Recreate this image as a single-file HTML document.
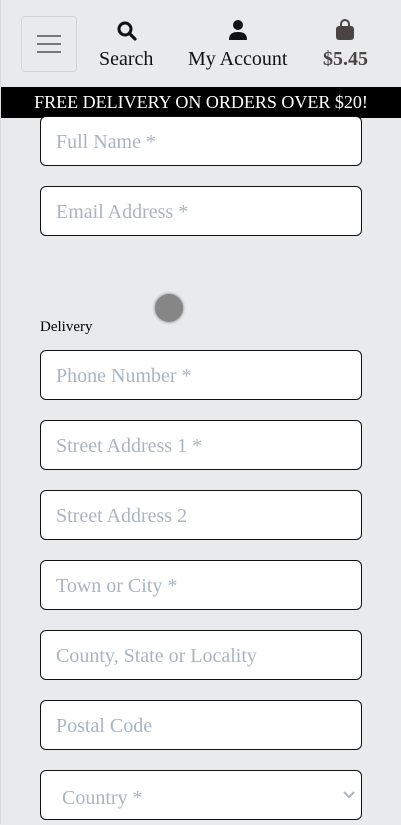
<!DOCTYPE html>
<html><head><meta charset="utf-8"><style>
body{margin:0;width:401px;height:824px;overflow:hidden;background:#e9eaec;font-family:"Liberation Serif",serif;position:relative}
.bl{position:absolute;left:0;top:0;width:1px;height:824px;background:#dcdcdc}
.ham{position:absolute;left:21px;top:16px;width:56px;height:56px;border:1px solid #d4d4d6;border-radius:4px;box-sizing:border-box}
.ham i{position:absolute;left:15px;width:24px;height:2px;background:#777}
.nav{position:absolute;top:48px;font-size:20px;color:#111;text-align:center}
.banner{position:absolute;left:1px;top:87px;width:400px;height:31px;background:#000;color:#fff;font-size:18px;text-align:center;line-height:31px}
.in{position:absolute;left:40px;width:322px;height:50px;background:#fff;border:1px solid #111;border-radius:6px;box-sizing:border-box;font-size:20px;color:#a9b5c1;padding-left:15px;line-height:50px}
</style></head><body>
<div class="bl"></div>
<div class="ham"><i style="top:18px"></i><i style="top:26px"></i><i style="top:34px"></i></div>
<svg style="position:absolute;left:116px;top:20px" width="22" height="22" viewBox="0 0 22 22"><circle cx="9" cy="9" r="6" fill="none" stroke="#111" stroke-width="3"/><path d="M13.5 13.5L19 19" stroke="#111" stroke-width="3.2" stroke-linecap="round"/></svg>
<div class="nav" style="left:99px">Search</div>
<svg style="position:absolute;left:228px;top:19px" width="20" height="22" viewBox="0 0 20 22"><circle cx="10" cy="6" r="5" fill="#111"/><path d="M1 21c0-6 3-8 9-8s9 2 9 8z" fill="#111"/></svg>
<div class="nav" style="left:188px">My Account</div>
<svg style="position:absolute;left:335px;top:19px" width="20" height="22" viewBox="0 0 20 22"><path d="M6 8V5a4 4 0 0 1 8 0v3" fill="none" stroke="#4a4444" stroke-width="2"/><rect x="1" y="7" width="18" height="14" rx="3" fill="#4a4444"/></svg>
<div class="nav" style="left:323px;color:#4a4444;font-weight:bold">$5.45</div>
<div class="banner">FREE DELIVERY ON ORDERS OVER $20!</div>
<div class="in" style="top:116px">Full Name *</div>
<div class="in" style="top:186px">Email Address *</div>
<div style="position:absolute;left:155px;top:294px;width:28px;height:28px;border-radius:50%;background:#868686;box-shadow:0 0 2px 1px #aaa"></div>
<div style="position:absolute;left:40px;top:319px;font-size:15px">Delivery</div>
<div class="in" style="top:350px">Phone Number *</div>
<div class="in" style="top:420px">Street Address 1 *</div>
<div class="in" style="top:490px">Street Address 2</div>
<div class="in" style="top:560px">Town or City *</div>
<div class="in" style="top:630px">County, State or Locality</div>
<div class="in" style="top:700px">Postal Code</div>
<div class="in" style="top:770px;padding-left:21px;line-height:54px">Country *
<svg style="position:absolute;right:6px;top:20px" width="12" height="8" viewBox="0 0 12 8"><path d="M1 1l5 5 5-5" fill="none" stroke="#a9b5c1" stroke-width="2"/></svg></div>
</body></html>
